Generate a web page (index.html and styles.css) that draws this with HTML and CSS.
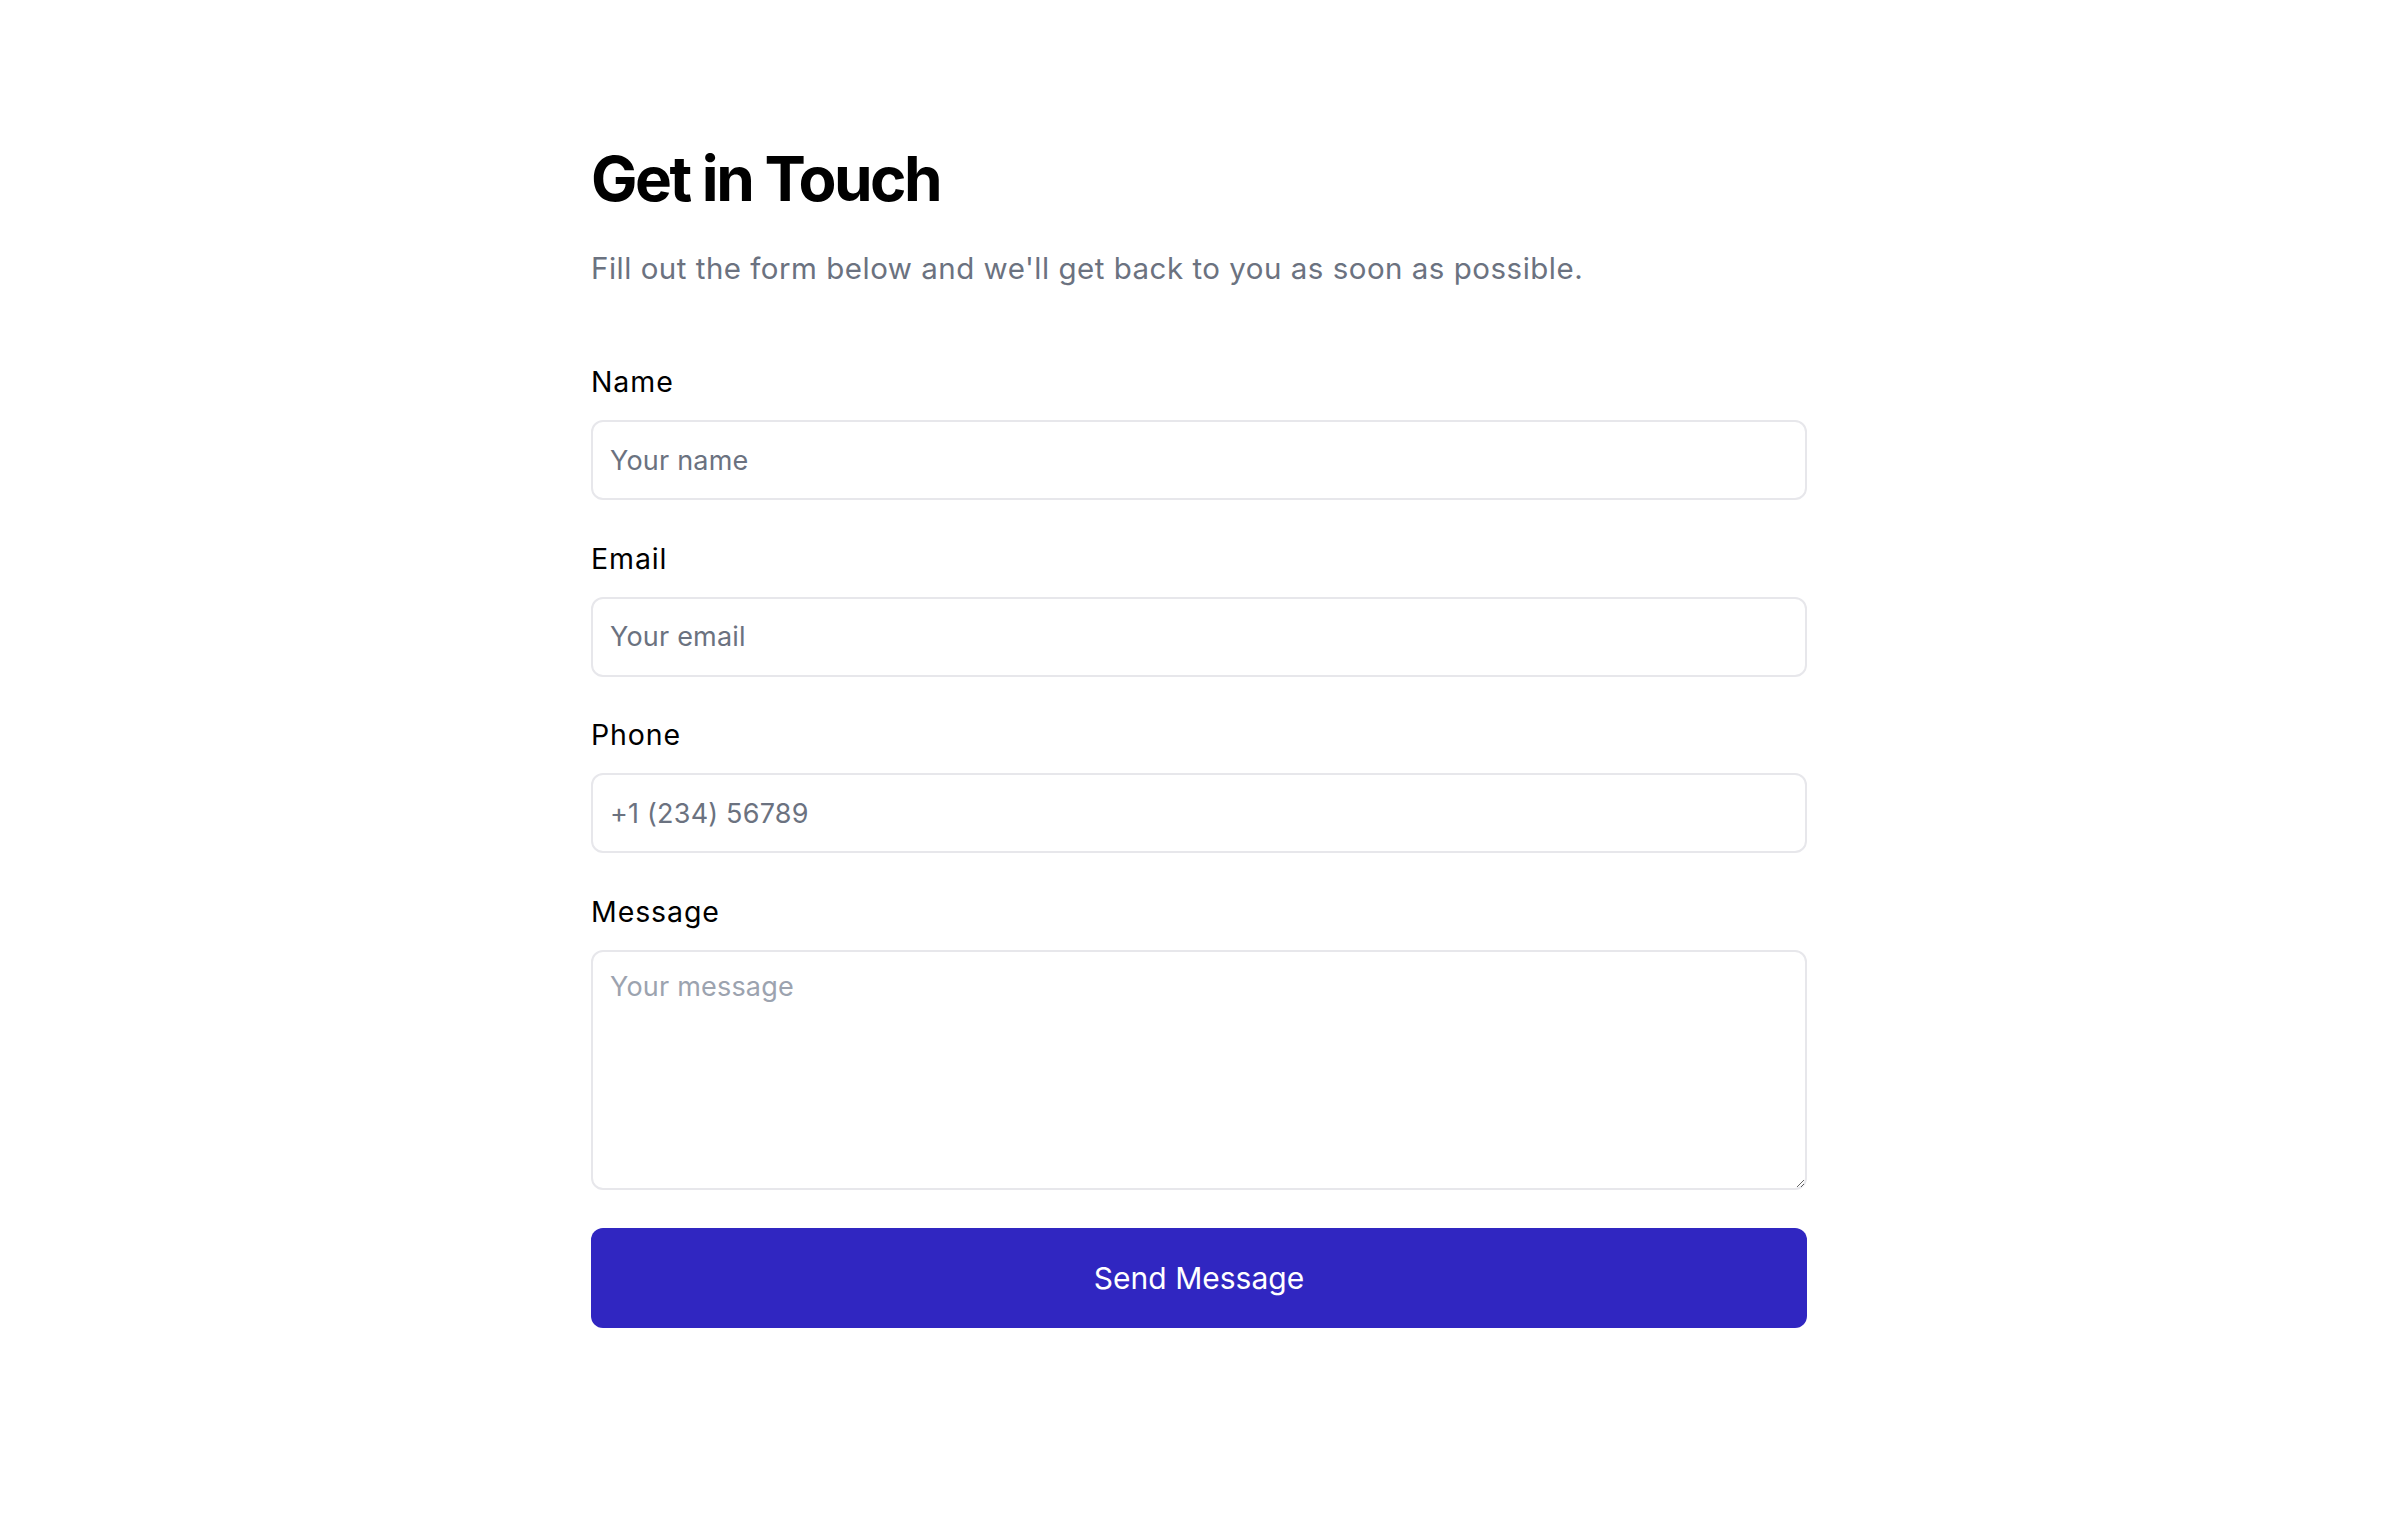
FILE: index.html
```html
<!DOCTYPE html>
<html lang="en">
<head>
    <meta charset="UTF-8">
    <meta name="viewport" content="width=device-width, initial-scale=1.0">
    <title>Contact Us</title>
    <link rel="stylesheet" href="styles.css">
</head>
<body>

<div class="contact">
    <h1>Get in Touch</h1>
    <p class="intro">Fill out the form below and we'll get back to you as soon as possible.</p>

    <form class="contact-form" onsubmit="return false;">
        <div class="field">
            <label for="name">Name</label>
            <input type="text" id="name" placeholder="Your name">
        </div>
        <div class="field">
            <label for="email">Email</label>
            <input type="email" id="email" placeholder="Your email">
        </div>
        <div class="field">
            <label for="phone">Phone</label>
            <input type="tel" id="phone" placeholder="+1 (234) 56789">
        </div>
        <div class="field">
            <label for="message">Message</label>
            <textarea id="message" placeholder="Your message"></textarea>
        </div>
        <!-- Submit -->
        <button type="submit">Send Message</button>
    </form>
</div>

</body>
</html>
```

FILE: styles.css
```css
body {
    font-family: Inter, "Noto Sans", sans-serif;
    background-color: #ffffff;
    color: #000000;
    margin: 0;
    padding: 140px 0 0 10px;
}
.contact {
    width: 1216px;
    margin: 0 auto;
}
h1 {
    font-size: 62px;
    font-weight: 700;
    line-height: 77px;
    letter-spacing: -2.5px;
    margin: 0 0 29px 0;
}
.intro {
    font-size: 29.5px;
    line-height: 44px;
    letter-spacing: 0.5px;
    color: #6b7280;
    margin: 0 0 72px 0;
}
.contact-form {
    display: flex;
    flex-direction: column;
    gap: 38.5px;
}
.field {
    display: flex;
    flex-direction: column;
    gap: 18px;
}
label {
    font-size: 28.5px;
    line-height: 40px;
    letter-spacing: 0.9px;
    color: #000000;
}
input, textarea {
    font-family: inherit;
    font-size: 27px;
    line-height: 1.5;
    letter-spacing: 0.2px;
    color: #111827;
    border: 2px solid #e7e7eb;
    border-radius: 12px;
    padding: 0 17px;
    box-sizing: border-box;
    width: 100%;
    outline: none;
}
input {
    height: 80px;
}
input::placeholder {
    color: #6b7280;
}
textarea {
    height: 240px;
    padding-top: 15px;
    padding-bottom: 15px;
}
textarea::placeholder {
    color: #9ca3af;
}
button {
    height: 100px;
    background-color: #3026c1;
    color: white;
    font-family: inherit;
    font-size: 30px;
    border: none;
    border-radius: 12px;
    cursor: pointer;
}
button:hover {
    background-color: #2820a8;
}
```
